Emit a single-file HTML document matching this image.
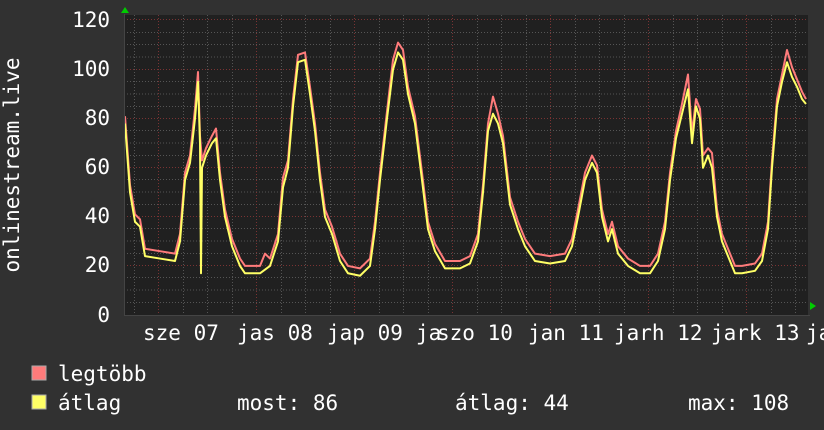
<!DOCTYPE html>
<html><head><meta charset="utf-8"><style>
html,body{margin:0;padding:0;background:#313131;}
svg{display:block}
text{font-family:"DejaVu Sans Mono","Liberation Mono",monospace;font-size:21px;fill:#fff}
</style></head><body>
<svg width="824" height="430" viewBox="0 0 824 430" xmlns="http://www.w3.org/2000/svg">
<rect width="824" height="430" fill="#313131"/>
<rect x="124" y="15" width="684" height="300" fill="#202020"/>
<g stroke="#555" stroke-width="1" stroke-dasharray="1,2">
<path d="M124 32.5H808M124 44.5H808M124 57H808M124 81.5H808M124 94H808M124 106.5H808M124 130.5H808M124 143H808M124 155.5H808M124 179.5H808M124 192H808M124 204.5H808M124 228.5H808M124 241H808M124 253.5H808M124 277.5H808M124 290H808M124 302.5H808"/>
<path d="M134.5 15V315M183.5 15V315M207.5 15V315M232.5 15V315M281.5 15V315M305.5 15V315M330.5 15V315M379.5 15V315M403.5 15V315M428.5 15V315M477.5 15V315M501.5 15V315M526.5 15V315M575.5 15V315M599.5 15V315M624.5 15V315M673.5 15V315M697.5 15V315M722.5 15V315M771.5 15V315M795.5 15V315"/>
</g>
<g stroke="#7a3333" stroke-width="1" stroke-dasharray="1,2">
<path d="M124 19.5H808M124 69.5H808M124 118.5H808M124 167.5H808M124 216.5H808M124 265.5H808"/>
<path d="M158.5 15V315M256.5 15V315M354.5 15V315M452.5 15V315M550.5 15V315M648.5 15V315M746.5 15V315"/>
</g>
<g transform="translate(0,315) scale(1,-2.454)" fill="none" stroke-linejoin="round">
<polyline stroke="#ff7b7b" stroke-width="2" vector-effect="non-scaling-stroke" points="125,81 130,53 135,41 140,39 145,27 160,26 175,25 180,33 185,58 190,65 195,84 198,99 200,73 202,63 206,68 212,73 216,76 220,58 225,43 232,31 240,23 245,20 260,20 265,25 270,23 278,33 283,56 288,63 293,88 298,106 305,107 310,93 315,78 320,58 325,43 332,36 340,25 348,20 360,19 370,23 375,38 380,58 387,83 393,104 398,111 403,108 408,93 415,81 422,58 428,38 435,29 445,22 460,22 470,24 478,33 483,53 488,78 493,89 498,82 503,73 510,48 518,38 525,31 535,25 550,24 565,25 572,31 578,43 585,58 592,65 597,61 602,43 608,33 612,38 618,28 628,23 640,20 650,20 658,25 665,38 670,58 676,75 682,86 688,98 692,74 696,88 700,84 703,65 708,68 712,66 717,43 722,33 730,25 735,20 742,20 755,21 762,25 768,38 772,63 777,88 782,98 787,108 792,101 797,96 802,91 806,88"/>
<polyline stroke="#ffff66" stroke-width="2" vector-effect="non-scaling-stroke" points="125,78 130,50 135,38 140,36 145,24 160,23 175,22 180,30 185,55 190,62 195,80 198,95 200,70 201,17 202,60 206,65 212,70 216,72 220,55 225,40 232,28 240,20 245,17 260,17 270,20 278,30 283,52 288,60 293,85 298,103 305,104 310,90 315,75 320,55 325,40 332,33 340,22 348,17 360,16 370,20 375,35 380,55 387,80 393,100 398,107 403,104 408,90 415,78 422,55 428,35 435,26 445,19 460,19 470,21 478,30 483,50 488,75 493,82 498,78 503,70 510,45 518,35 525,28 535,22 550,21 565,22 572,28 578,40 585,55 592,62 597,58 602,40 608,30 612,35 618,25 628,20 640,17 650,17 658,22 665,35 670,55 676,72 682,82 688,92 692,70 696,85 700,80 703,60 708,65 712,60 717,40 722,30 730,22 735,17 742,17 755,18 762,22 768,35 772,60 777,85 782,95 787,103 792,97 797,93 802,88 806,86"/>
</g>
<path d="M124 315.5H810M124.5 315V14" stroke="#444" stroke-width="1"/>
<path d="M121 13L125 7L129 13Z" fill="#00cc00"/>
<path d="M810 302L816 306L810 310Z" fill="#00cc00"/>
<g text-anchor="end">
<text x="110" y="27">120</text><text x="110" y="76">100</text><text x="110" y="125">80</text>
<text x="110" y="174">60</text><text x="110" y="223">40</text><text x="110" y="272">20</text><text x="110" y="322">0</text>
</g>
<text transform="translate(19,165) rotate(-90)" text-anchor="middle">onlinestream.live</text>
<g>
<text x="143" y="340">sze 07</text>
<text x="237" y="340">jas 08</text>
<text x="327" y="340">jap 09</text>
<text x="416" y="340">ja</text><text x="437" y="340">szo 10</text>
<text x="528" y="340">jan 11</text>
<text x="614" y="340">jarh 12</text>
<text x="711" y="340">jark 13</text>
<text x="806" y="340">ja</text>
</g>
<rect x="32" y="366" width="14" height="14" fill="#ff7b7b" stroke="#aaa" stroke-width="1"/>
<rect x="32" y="395" width="14" height="14" fill="#ffff66" stroke="#aaa" stroke-width="1"/>
<text x="58" y="381">legtöbb</text>
<text x="58" y="410">átlag</text>
<text x="237" y="410">most: 86</text>
<text x="455" y="410">átlag: 44</text>
<text x="688" y="410">max: 108</text>
</svg>
</body></html>
